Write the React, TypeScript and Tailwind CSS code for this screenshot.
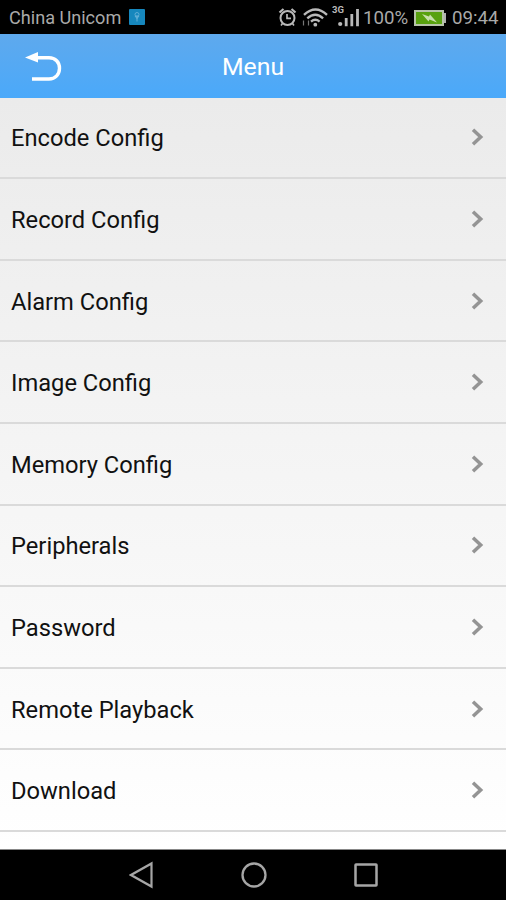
import React from 'react';

const items = [
  "Encode Config",
  "Record Config",
  "Alarm Config",
  "Image Config",
  "Memory Config",
  "Peripherals",
  "Password",
  "Remote Playback",
  "Download",
];

const StatusBar = () => {
  return (
    <div className="flex h-[34px] shrink-0 items-center bg-black pl-[9px] pr-2 leading-none text-[#a9a9a9]">
      <span className="w-[120px] whitespace-nowrap pt-[2px] text-[18.1px]">China Unicom</span>
      {/* usb badge */}
      <svg className="block h-4 w-4 shrink-0" viewBox="0 0 16 16" fill="none">
        <rect width="16" height="16" rx="1" fill="#1687bd" />
        <path d="M8 6v6.500M6 7l2 2.500L10 7" stroke="#6db5da" strokeWidth="0.900" />
        <circle cx="8" cy="5.500" r="2" stroke="#6db5da" strokeWidth="0.800" />
      </svg>
      <svg className="ml-auto block h-[34px] w-[88px] shrink-0" viewBox="274 0 88 34" fill="none" stroke="#b9b9b9">
        {/* alarm */}
        <circle cx="287.5" cy="18" r="7" strokeWidth="2" />
        <path d="M279.500 12.500l4-3.500M295.500 12.500l-4-3.500" strokeWidth="2.200" />
        <path d="M287 14v4.300h4" strokeWidth="1.7" />
        <path d="M282.5 23.5l-1.5 2M292.5 23.5l1.5 2" strokeWidth="1.6" />
        {/* wifi */}
        <path d="M304 14.8q11.5-10.5 23 0" strokeWidth="2.4" />
        <path d="M307.3 18.3q7.9-7 15.8 0" strokeWidth="2.4" />
        <path d="M311 21.6q4.3-3.6 8.6 0" strokeWidth="2.4" />
        <circle cx="315.3" cy="24.7" r="1.9" fill="#b9b9b9" stroke="none" />
        <path d="M303.5 20.5v5M308.5 20.5v5" strokeWidth="1.2" stroke="#777" />
        {/* mobile signal */}
        <text x="332" y="13.4" fontSize="9.5" fontWeight="700" fill="#b9b9b9" stroke="none">3G</text>
        <circle cx="340.2" cy="24" r="2.1" fill="#b9b9b9" stroke="none" />
        <path d="M346.2 18v8.2M351.8 14v12.2M357.5 9v17.2" strokeWidth="2.8" />
      </svg>
      <span className="ml-[1px] w-[51px] shrink-0 whitespace-nowrap pt-[2px] text-[18.7px]">100%</span>
      <svg className="mt-px block h-4 w-[33px] shrink-0" viewBox="0 0 33 16" fill="none">
        <rect x="1" y="1" width="28" height="14" fill="#58a10f" stroke="#b7c3a9" strokeWidth="2" />
        <path d="M31 3v10" stroke="#b0b0b0" strokeWidth="2" />
        <path d="M8 4l7 2.5 1-2 7 8-7.5-3-1 2z" fill="#c8dfad" />
      </svg>
      <span className="ml-[5px] w-[46px] shrink-0 whitespace-nowrap pt-[2px] text-[18.7px]">09:44</span>
    </div>
  );
};

const Header = () => {
  return (
    <header className="grid h-[63.600px] shrink-0 grid-cols-3 items-center bg-linear-to-b from-[#5ea9ed] to-[#4aa9fa]">
      <button className="ml-[25px] mt-[3px] h-[30px] w-[38px]" aria-label="Back">
        <svg className="block h-[30px] w-[38px]" viewBox="25 52 38 30" fill="none">
          <path d="M25 57.5l13-5.500v10.500z" fill="#fff" />
          <path d="M36 57.800h13c6.500 0 10.500 4.500 10.500 10.500s-4 10.700-10.500 10.700H32" stroke="#fff" strokeWidth="3.400" />
        </svg>
      </button>
      <h1 className="pt-1 text-center text-[24.800px] leading-none text-white">Menu</h1>
    </header>
  );
};

const Row = ({ label }: { label: string }) => {
  return (
    <li className="flex h-[81.6px] shrink-0 items-center justify-between border-b-2 border-[#dadada] pl-[11px] pr-[22px]">
      <span className="pt-[2px] text-[23.700px] leading-8 text-[#111]">{label}</span>
      <svg className="block h-[18px] w-[13px]" viewBox="0 0 13 18" fill="none">
        <path d="M2 1.800L9.700 9 2 16.200" stroke="#949494" strokeWidth="3.500" />
      </svg>
    </li>
  );
};

const NavBar = () => {
  return (
    <nav className="flex h-[50px] shrink-0 items-center justify-between bg-black pl-[129px] pr-[128px]">
      <svg className="block h-7 w-6" viewBox="0 0 24 28" fill="none" stroke="#a6a6a6" strokeWidth="2.2">
        <path d="M22.500 2.500v23L2 14z" />
      </svg>
      <svg className="block h-7 w-7" viewBox="0 0 28 28" fill="none" stroke="#a6a6a6" strokeWidth="2.300">
        <circle cx="14" cy="14" r="11.500" />
      </svg>
      <svg className="block h-7 w-6" viewBox="0 0 24 28" fill="none" stroke="#a6a6a6" strokeWidth="2.500">
        <rect x="1.500" y="3.500" width="21" height="21" rx="0.500" />
      </svg>
    </nav>
  );
};

const App = () => {
  return (
    <div className="flex h-[900px] w-full flex-col overflow-hidden bg-black font-[Roboto,sans-serif]">
      <StatusBar />
      <Header />
      <ul className="flex min-h-0 flex-1 flex-col overflow-hidden border-b border-[#888] bg-linear-to-b from-[#ebebeb] to-white">
        {items.map((item) => (
          <Row key={item} label={item} />
        ))}
      </ul>
      <NavBar />
    </div>
  );
};

export default App;
